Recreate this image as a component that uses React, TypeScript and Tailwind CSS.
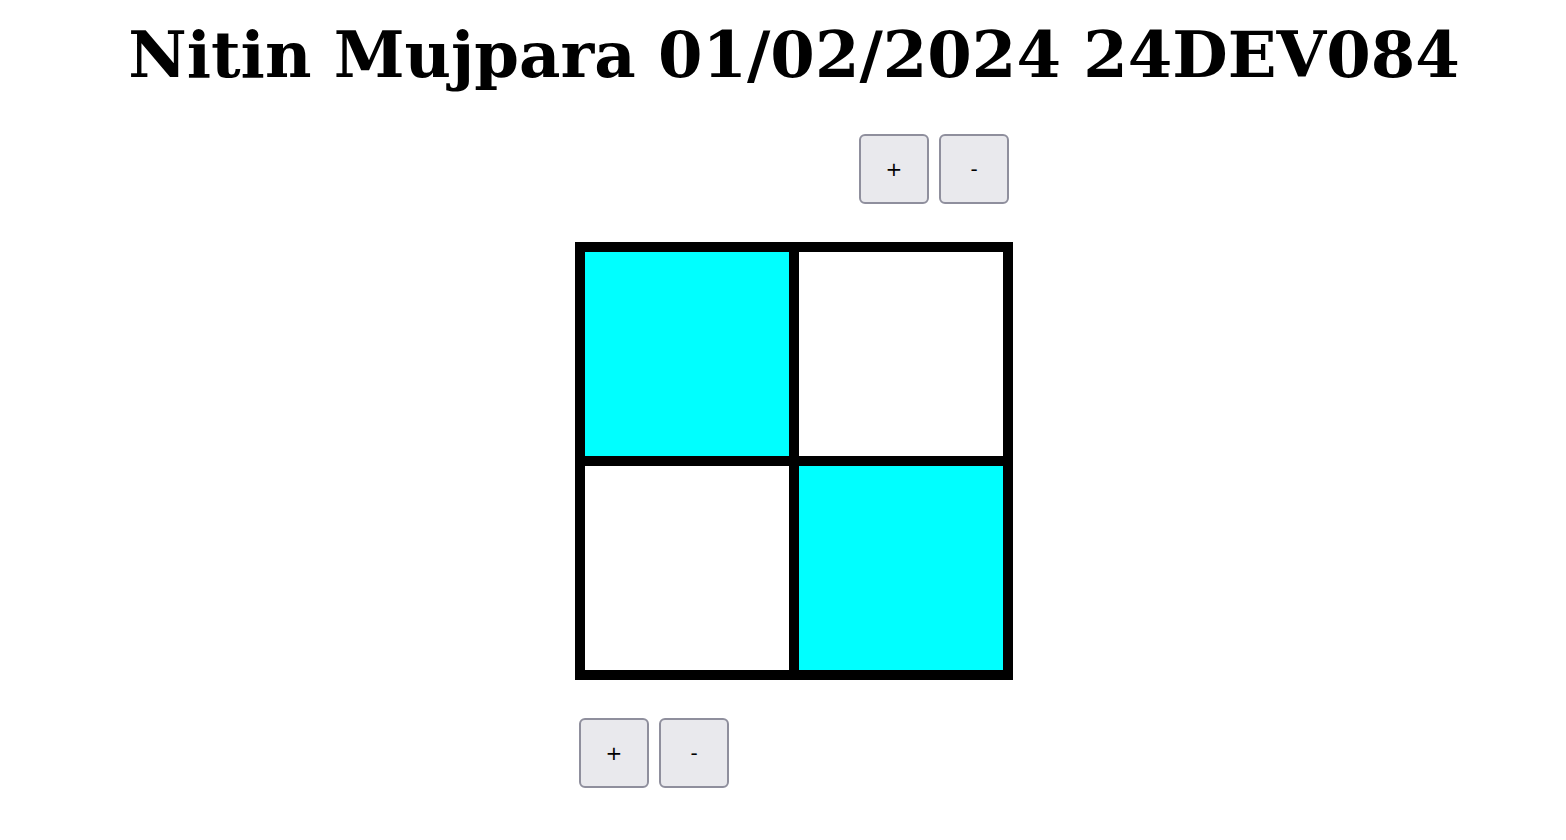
const Btn = ({ label }: { label: string }) => {
  return (
    <button className="w-[70px] h-[70px] rounded-[6px] border-2 border-[#8f8f9d] bg-[#e9e9ed] text-black text-[20px] font-['DejaVu_Sans',sans-serif] flex items-center justify-center">
      {label}
    </button>
  );
};

const App = () => {
  const cells = [true, false, false, true];
  return (
    <div className="min-h-screen bg-white flex flex-col items-center pl-[22px]">
      <h1 className="mt-[17px] text-[64px] leading-[75px] font-bold font-['DejaVu_Serif',serif] text-black whitespace-nowrap">
        Nitin Mujpara 01/02/2024 24DEV084
      </h1>
      <div className="w-[438px] mt-[42px] flex flex-col">
        <div className="flex justify-end gap-[10px] pr-[4px]">
          <Btn label="+" />
          <Btn label="-" />
        </div>
        <div className="mt-[38px] grid grid-cols-2 gap-[10px] bg-black p-[10px]">
          {cells.map((on, i) => (
            <div key={i} className={on ? "h-[204px] bg-[#00ffff]" : "h-[204px] bg-white"} />
          ))}
        </div>
        <div className="mt-[38px] flex gap-[10px] pl-[4px]">
          <Btn label="+" />
          <Btn label="-" />
        </div>
      </div>
    </div>
  );
};

export default App;
